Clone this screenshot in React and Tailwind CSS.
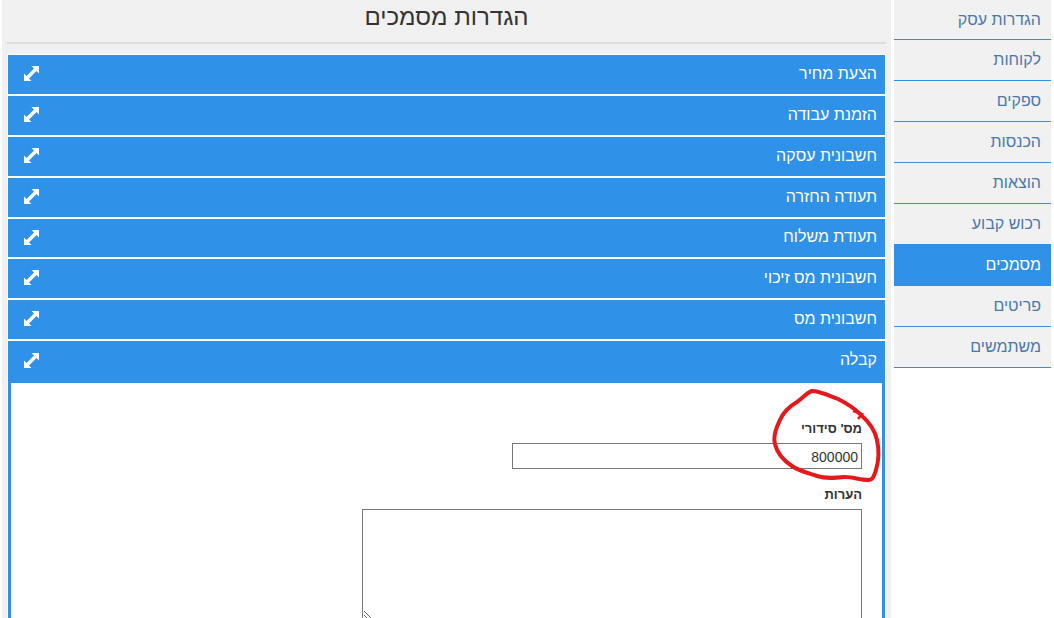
import React from "react";

const menu = ["הגדרות עסק", "לקוחות", "ספקים", "הכנסות", "הוצאות", "רכוש קבוע", "מסמכים", "פריטים", "משתמשים"];
const docs = [
  { title: "הצעת מחיר", height: "h-[39px]" },
  { title: "הזמנת עבודה", height: "h-[39px]" },
  { title: "חשבונית עסקה", height: "h-[39px]" },
  { title: "תעודה החזרה", height: "h-[39px]" },
  { title: "תעודת משלוח", height: "h-[38px]" },
  { title: "חשבונית מס זיכוי", height: "h-[39px]" },
  { title: "חשבונית מס", height: "h-[39px]" },
];

const ExpandIcon = () => (
  <svg width="15" height="15" viewBox="0 0 15 15" fill="#ffffff" stroke="none">
    <path d="M7.5 0H15V7.5L12.5 5L5 12.5L7.5 15H0V7.5L2.5 10L10 2.5Z" />
  </svg>
);

const DocHeader = ({ title, className }) => (
  <div className={`flex items-center justify-between bg-[#3091e9] pr-[8px] pl-[16px] text-base text-white ${className}`}>
    <span>{title}</span>
    <ExpandIcon />
  </div>
);

const App = () => {
  return (
    <div dir="rtl" className="relative flex h-[618px] overflow-hidden bg-white pr-[3px] pl-[2px] font-['Liberation_Sans',sans-serif]">
      <div className="w-[157px] shrink-0">
        {menu.map((item, i) => (
          <div
            key={item}
            className={`flex items-center border-b border-[#3091e9] pr-[10px] text-base ${i === 0 ? "h-[40px]" : "h-[41px]"} ${
              item === "מסמכים" ? "bg-[#3091e9] text-white" : "bg-[#f1f1f1] text-[#4a78ad]"
            }`}
          >
            {item}
          </div>
        ))}
      </div>

      <div className="mr-[3px] flex-1 bg-[#f0f0f0] px-[5px]">
        <div className="mb-[10px] border-b-2 border-[#dddddd] pt-[1px] pb-[9px] text-center text-2xl leading-[32px] text-[#333333]">
          הגדרות מסמכים
        </div>
        <div className="bg-white px-[1px] pt-[1px]">
          {docs.map((doc) => (
            <DocHeader key={doc.title} title={doc.title} className={`${doc.height} mb-[2px] pb-[2px]`} />
          ))}
          <DocHeader title="קבלה" className="h-[42px] pb-[4px]" />
          <div className="h-[300px] border-x-[3px] border-[#3091e9] bg-white pt-[36px] pr-[20px]">
            <label className="mb-[4px] block text-[13px] font-bold leading-[20px] text-[#333333]">מס' סידורי</label>
            <input
              dir="ltr"
              defaultValue="800000"
              className="block h-[26px] w-[350px] border border-[#767676] bg-white pt-[1px] pr-[3px] pl-[2px] text-right text-sm text-[#333333]"
            />
            <label className="mt-[16px] mb-[4px] block text-[13px] font-bold leading-[20px] text-[#333333]">הערות</label>
            <textarea className="block h-[111px] w-[500px] border border-[#767676] bg-white" />
          </div>
        </div>
      </div>

      {/* red marker circle drawn over the form */}
      <svg className="pointer-events-none absolute top-0 left-0" width="1054" height="618" fill="none">
        <path
          d="M812 391C820 391 830 396 838 399C846 403 854 408 860 414C868 421 875 430 877 440C879 449 879 460 876 470C874 476 873 480 868 480C860 480 853 477 845 477C835 478 826 479 817 476C808 473 799 471 792 466C783 460 777 453 775 444C773 437 776 428 780 420C784 411 790 406 797 402C803 398 806 393 812 391Z"
          stroke="#e4191c"
          strokeWidth="4"
          strokeLinejoin="round"
        />
        <path d="M853 411L862 414L858 419" stroke="#e4191c" strokeWidth="2.5" />
      </svg>
    </div>
  );
};

export default App;
